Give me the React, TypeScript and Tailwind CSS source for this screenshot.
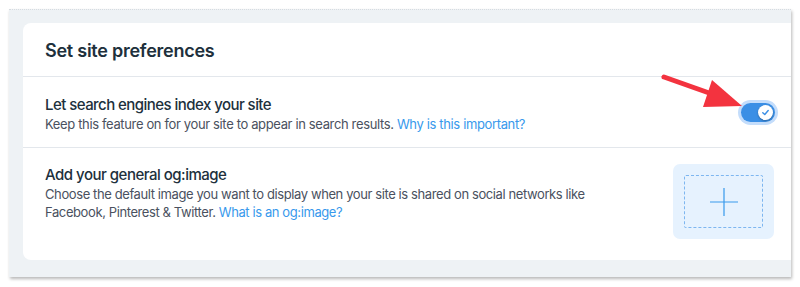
import React from "react";

export default function App() {
  const font = { fontFamily: '"Inter", "Noto Sans", sans-serif' };
  return (
    <div className="relative w-[800px] h-[287px] bg-white overflow-hidden" style={font}>
      <div className="ml-[9px] mt-[9px] w-[782px] h-[268px] bg-[#eef2f5] border-t border-dotted border-[#d6dbe0] pl-[14px] pt-[13px] pb-[17px] shadow-[1px_2px_3px_rgba(0,0,0,0.28)]">
        <div className="h-full bg-white rounded-l-[8px] flex flex-col">
          <div className="h-[54px] flex items-center px-[22px] border-b border-[#e3e7ec]">
            <h2 className="text-[18px] font-semibold text-[#20303c] tracking-[-0.25px] pt-[2px]">Set site preferences</h2>
          </div>
          <div className="h-[71px] flex items-center justify-between pl-[22px] pr-[16px] border-b border-[#e3e7ec]">
            <div className="flex flex-col pt-[4px]">
              <div className="text-[15px] font-medium text-[#20303c] leading-[20px] tracking-[-0.55px]">Let search engines index your site</div>
              <div className="text-[13px] text-[#4a5160] leading-[18px] tracking-[-0.36px]">
                Keep this feature on for your site to appear in search results.{" "}
                <span className="text-[#3899ec]">Why is this important?</span>
              </div>
            </div>
            <div className="relative w-[34px] h-[19px] rounded-full bg-[#3b8fe5] ring-[3px] ring-[#c4ddfb] mt-[1px]">
              <div className="absolute right-[2px] top-[2px] w-[15px] h-[15px] rounded-full bg-white shadow-[0_1px_2px_rgba(0,0,0,0.3)] flex items-center justify-center">
                <svg width="9" height="9" viewBox="0 0 10 10">
                  <path d="M2 5.2 L4.2 7.2 L8 2.8" fill="none" stroke="#3b8fe5" strokeWidth="1.6" strokeLinecap="round" strokeLinejoin="round" />
                </svg>
              </div>
            </div>
          </div>
          <div className="flex-1 flex justify-between pl-[22px] pr-[17px] pt-[16px]">
            <div className="flex flex-col pt-[1px] w-[580px]">
              <div className="text-[15px] font-medium text-[#20303c] leading-[20px] tracking-[-0.5px]">Add your general og:image</div>
              <div className="text-[13px] text-[#4a5160] leading-[18px] tracking-[-0.4px]">
                Choose the default image you want to display when your site is shared on social networks like
                <br />
                Facebook, Pinterest &amp; Twitter. <span className="text-[#3899ec]">What is an og:image?</span>
              </div>
            </div>
            <div className="w-[101px] h-[75px] rounded-[7px] bg-[#e6f2fe] p-[11px] flex">
              <div className="flex-1 border border-dashed border-[#7db6f0] rounded-[2px] flex items-center justify-center">
                <svg width="28" height="28" viewBox="0 0 28 28">
                  <path d="M14 0 V28 M0 14 H28" stroke="#3899ec" strokeWidth="1.2" />
                </svg>
              </div>
            </div>
          </div>
        </div>
      </div>
      <svg className="absolute left-0 top-0 pointer-events-none" width="800" height="287" viewBox="0 0 800 287">
        <line x1="664" y1="77" x2="712" y2="94" stroke="#f3333f" strokeWidth="5" strokeLinecap="round" />
        <polygon points="712,80 703,107 742,106" fill="#f3333f" />
      </svg>
    </div>
  );
}
